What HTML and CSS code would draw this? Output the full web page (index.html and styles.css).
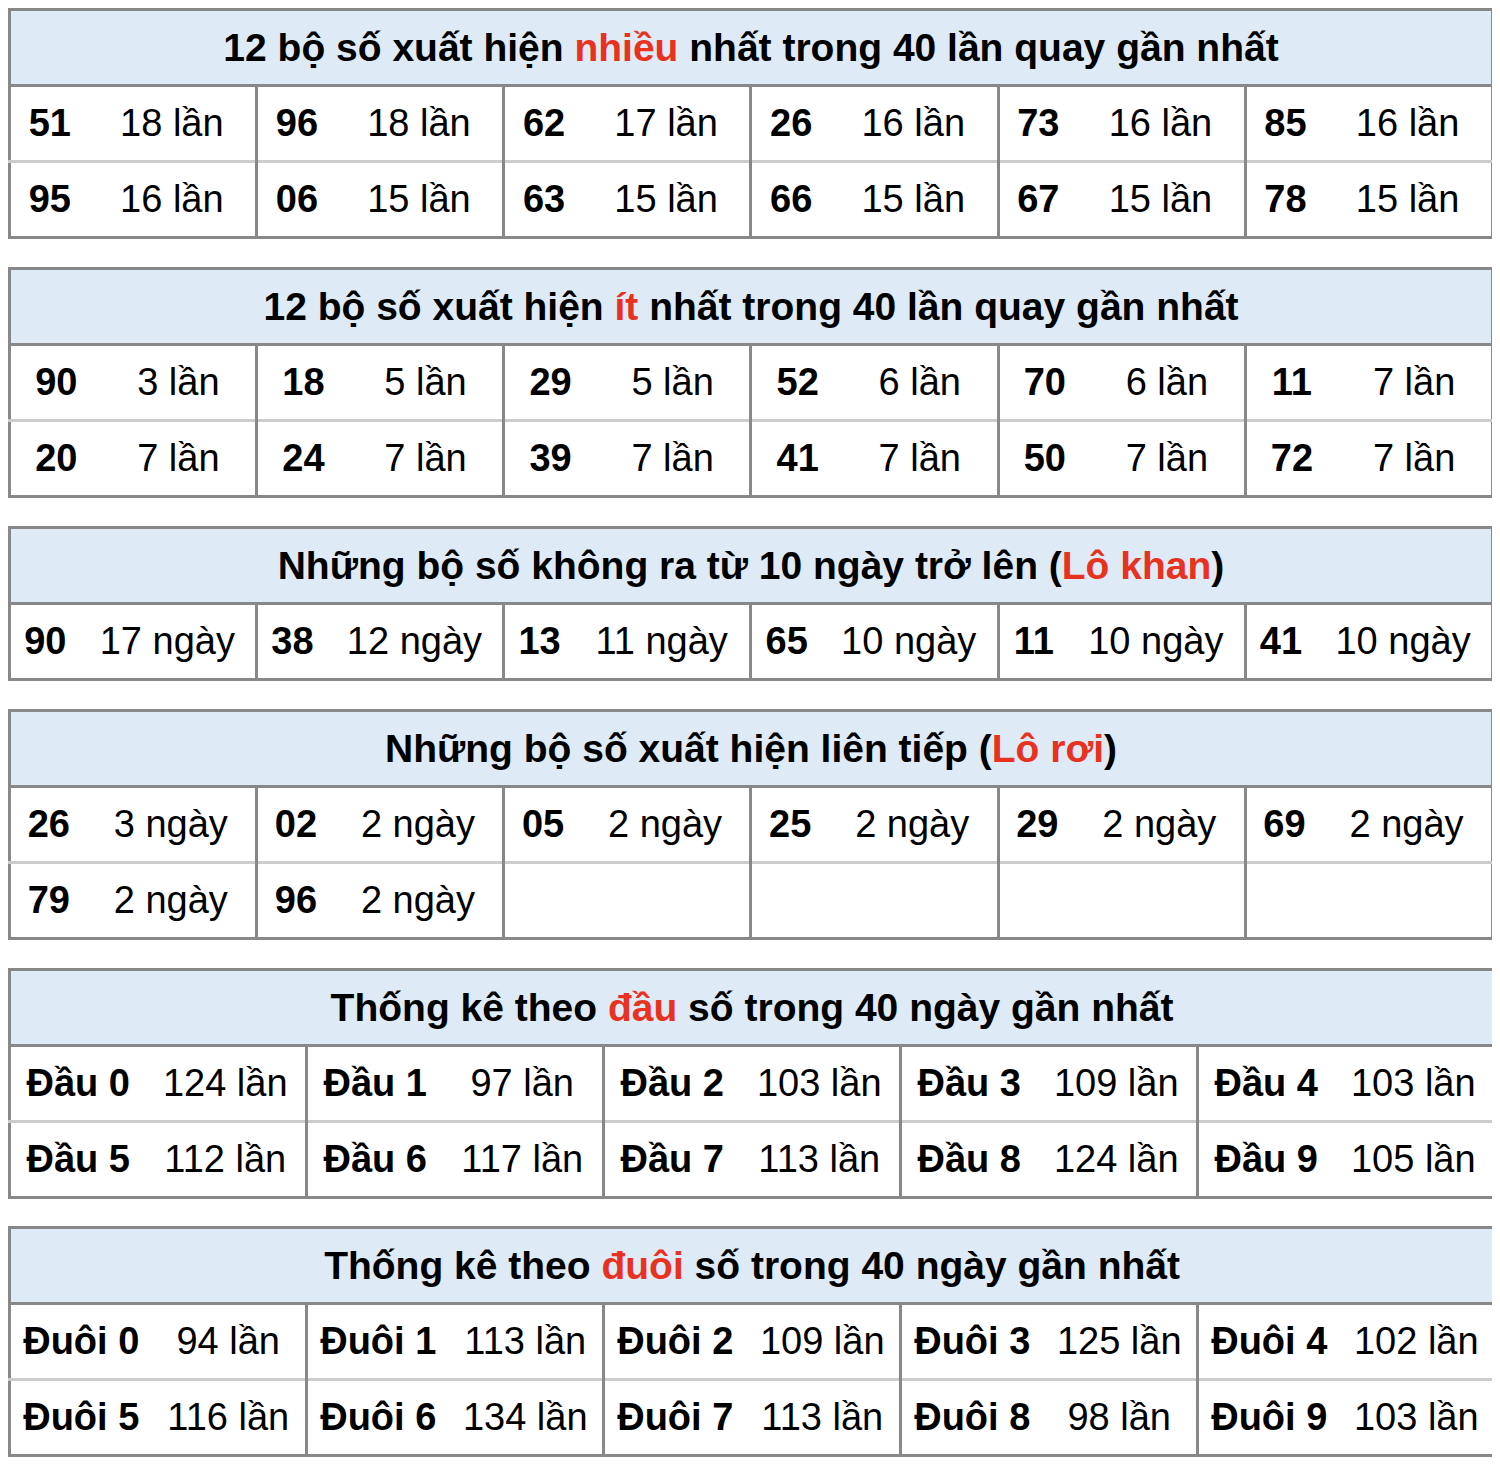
FILE: index.html
```html
<!DOCTYPE html>
<html lang="vi">
<head>
<meta charset="utf-8">
<title>Thống kê lô tô</title>
<link rel="stylesheet" href="styles.css">
</head>
<body>

<table class="stat t-a">
  <colgroup>
    <col class="cn"><col class="cc"><col class="cn"><col class="cc"><col class="cn"><col class="cc">
    <col class="cn"><col class="cc"><col class="cn"><col class="cc"><col class="cn"><col class="cc">
  </colgroup>
  <tr><th colspan="12">12 bộ số xuất hiện <span class="hl">nhiều</span> nhất trong 40 lần quay gần nhất</th></tr>
  <tr class="r1">
    <td class="n">51</td><td class="c">18 lần</td>
    <td class="n">96</td><td class="c">18 lần</td>
    <td class="n">62</td><td class="c">17 lần</td>
    <td class="n">26</td><td class="c">16 lần</td>
    <td class="n">73</td><td class="c">16 lần</td>
    <td class="n">85</td><td class="c">16 lần</td>
  </tr>
  <tr class="r2">
    <td class="n">95</td><td class="c">16 lần</td>
    <td class="n">06</td><td class="c">15 lần</td>
    <td class="n">63</td><td class="c">15 lần</td>
    <td class="n">66</td><td class="c">15 lần</td>
    <td class="n">67</td><td class="c">15 lần</td>
    <td class="n">78</td><td class="c">15 lần</td>
  </tr>
</table>

<table class="stat t-b">
  <colgroup>
    <col class="cn"><col class="cc"><col class="cn"><col class="cc"><col class="cn"><col class="cc">
    <col class="cn"><col class="cc"><col class="cn"><col class="cc"><col class="cn"><col class="cc">
  </colgroup>
  <tr><th colspan="12">12 bộ số xuất hiện <span class="hl">ít</span> nhất trong 40 lần quay gần nhất</th></tr>
  <tr class="r1">
    <td class="n">90</td><td class="c">3 lần</td>
    <td class="n">18</td><td class="c">5 lần</td>
    <td class="n">29</td><td class="c">5 lần</td>
    <td class="n">52</td><td class="c">6 lần</td>
    <td class="n">70</td><td class="c">6 lần</td>
    <td class="n">11</td><td class="c">7 lần</td>
  </tr>
  <tr class="r2">
    <td class="n">20</td><td class="c">7 lần</td>
    <td class="n">24</td><td class="c">7 lần</td>
    <td class="n">39</td><td class="c">7 lần</td>
    <td class="n">41</td><td class="c">7 lần</td>
    <td class="n">50</td><td class="c">7 lần</td>
    <td class="n">72</td><td class="c">7 lần</td>
  </tr>
</table>

<table class="stat t-c">
  <colgroup>
    <col class="cn"><col class="cc"><col class="cn"><col class="cc"><col class="cn"><col class="cc">
    <col class="cn"><col class="cc"><col class="cn"><col class="cc"><col class="cn"><col class="cc">
  </colgroup>
  <tr><th colspan="12">Những bộ số không ra từ 10 ngày trở lên (<span class="hl">Lô khan</span>)</th></tr>
  <tr class="r1">
    <td class="n">90</td><td class="c">17 ngày</td>
    <td class="n">38</td><td class="c">12 ngày</td>
    <td class="n">13</td><td class="c">11 ngày</td>
    <td class="n">65</td><td class="c">10 ngày</td>
    <td class="n">11</td><td class="c">10 ngày</td>
    <td class="n">41</td><td class="c">10 ngày</td>
  </tr>
</table>

<table class="stat t-d">
  <colgroup>
    <col class="cn"><col class="cc"><col class="cn"><col class="cc"><col class="cn"><col class="cc">
    <col class="cn"><col class="cc"><col class="cn"><col class="cc"><col class="cn"><col class="cc">
  </colgroup>
  <tr><th colspan="12">Những bộ số xuất hiện liên tiếp (<span class="hl">Lô rơi</span>)</th></tr>
  <tr class="r1">
    <td class="n">26</td><td class="c">3 ngày</td>
    <td class="n">02</td><td class="c">2 ngày</td>
    <td class="n">05</td><td class="c">2 ngày</td>
    <td class="n">25</td><td class="c">2 ngày</td>
    <td class="n">29</td><td class="c">2 ngày</td>
    <td class="n">69</td><td class="c">2 ngày</td>
  </tr>
  <tr class="r2">
    <td class="n">79</td><td class="c">2 ngày</td>
    <td class="n">96</td><td class="c">2 ngày</td>
    <td class="n"></td><td class="c"></td>
    <td class="n"></td><td class="c"></td>
    <td class="n"></td><td class="c"></td>
    <td class="n"></td><td class="c"></td>
  </tr>
</table>

<table class="stat t-e">
  <colgroup>
    <col class="cn"><col class="cc"><col class="cn"><col class="cc"><col class="cn"><col class="cc">
    <col class="cn"><col class="cc"><col class="cn"><col class="cc">
  </colgroup>
  <tr><th colspan="10">Thống kê theo <span class="hl">đầu</span> số trong 40 ngày gần nhất</th></tr>
  <tr class="r1">
    <td class="n">Đầu 0</td><td class="c">124 lần</td>
    <td class="n">Đầu 1</td><td class="c">97 lần</td>
    <td class="n">Đầu 2</td><td class="c">103 lần</td>
    <td class="n">Đầu 3</td><td class="c">109 lần</td>
    <td class="n">Đầu 4</td><td class="c">103 lần</td>
  </tr>
  <tr class="r2">
    <td class="n">Đầu 5</td><td class="c">112 lần</td>
    <td class="n">Đầu 6</td><td class="c">117 lần</td>
    <td class="n">Đầu 7</td><td class="c">113 lần</td>
    <td class="n">Đầu 8</td><td class="c">124 lần</td>
    <td class="n">Đầu 9</td><td class="c">105 lần</td>
  </tr>
</table>

<table class="stat t-f">
  <colgroup>
    <col class="cn"><col class="cc"><col class="cn"><col class="cc"><col class="cn"><col class="cc">
    <col class="cn"><col class="cc"><col class="cn"><col class="cc">
  </colgroup>
  <tr><th colspan="10">Thống kê theo <span class="hl">đuôi</span> số trong 40 ngày gần nhất</th></tr>
  <tr class="r1">
    <td class="n">Đuôi 0</td><td class="c">94 lần</td>
    <td class="n">Đuôi 1</td><td class="c">113 lần</td>
    <td class="n">Đuôi 2</td><td class="c">109 lần</td>
    <td class="n">Đuôi 3</td><td class="c">125 lần</td>
    <td class="n">Đuôi 4</td><td class="c">102 lần</td>
  </tr>
  <tr class="r2">
    <td class="n">Đuôi 5</td><td class="c">116 lần</td>
    <td class="n">Đuôi 6</td><td class="c">134 lần</td>
    <td class="n">Đuôi 7</td><td class="c">113 lần</td>
    <td class="n">Đuôi 8</td><td class="c">98 lần</td>
    <td class="n">Đuôi 9</td><td class="c">103 lần</td>
  </tr>
</table>

</body>
</html>
```

FILE: styles.css
```css
html, body {
  background: #ffffff;
}

body {
  margin: 8px;
  font-family: "Liberation Sans", Arial, Helvetica, sans-serif;
  color: #000000;
}

.stat {
  width: 1486px;
  border-collapse: collapse;
  table-layout: fixed;
  border: 3px solid #888888;
  margin: 0 0 28px 0;
}

.t-e {
  margin-bottom: 27px;
}

.stat th {
  background: #deeaf6;
  height: 73px;
  padding: 0;
  font-size: 39px;
  font-weight: bold;
  text-align: center;
  vertical-align: middle;
  white-space: nowrap;
  border-bottom: 3px solid #888888;
}

.stat td {
  height: 73px;
  padding: 0;
  font-size: 38px;
  text-align: center;
  vertical-align: middle;
  white-space: nowrap;
}

.stat td.n {
  font-weight: bold;
  border-left: 3px solid #888888;
}

.stat td.n:first-child {
  border-left: none;
}

.stat tr.r2 td {
  border-top: 3px solid #cccccc;
}

.hl {
  color: #e8321f;
}

/* column widths per table */
.t-a col.cn { width: 79px; }
.t-a col.cc { width: 168px; }

.t-b col.cn { width: 92px; }
.t-b col.cc { width: 155px; }

.t-c col.cn { width: 70px; }
.t-c col.cc { width: 177px; }

.t-d col.cn { width: 77px; }
.t-d col.cc { width: 170px; }

.t-e col.cn { width: 136px; }
.t-e col.cc { width: 161px; }

.t-f col.cn { width: 142px; }
.t-f col.cc { width: 155px; }
```
